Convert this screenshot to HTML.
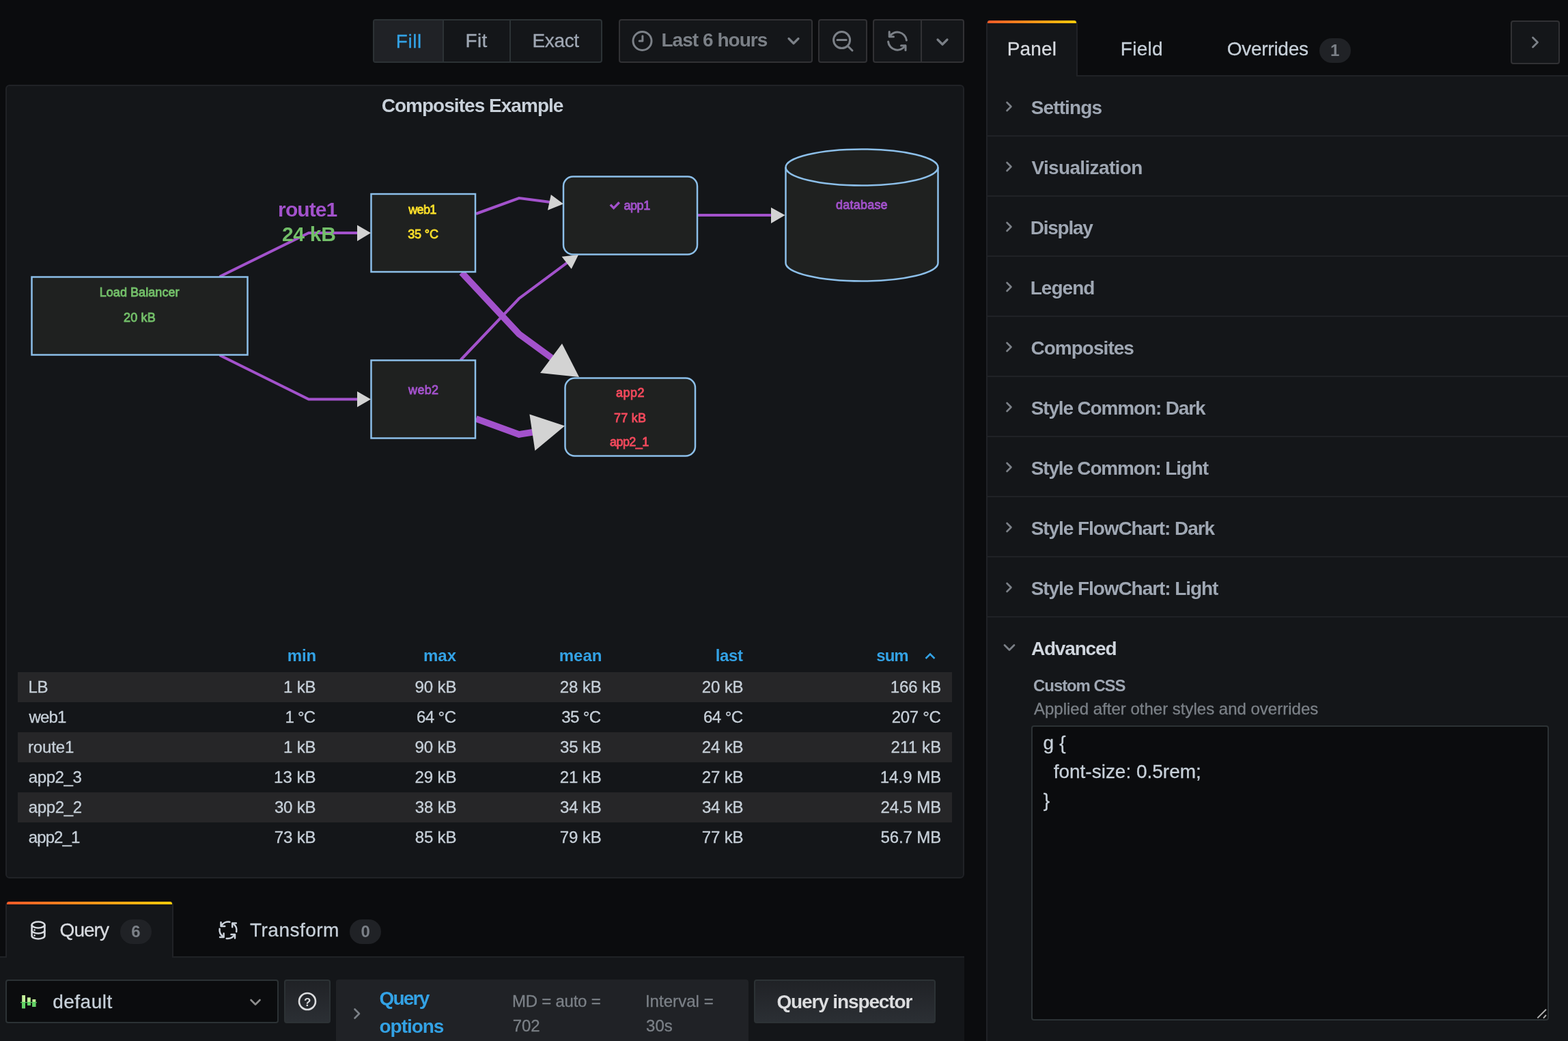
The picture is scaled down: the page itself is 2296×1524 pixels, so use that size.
<!DOCTYPE html>
<html lang="en"><head><meta charset="utf-8"><title>Composites Example - Grafana</title>
<style>
html,body{margin:0;padding:0;}
body{width:2296px;height:1524px;overflow:hidden;background:#0b0c0e;position:relative;
font-family:"Liberation Sans",sans-serif;}
#root{position:absolute;left:0;top:0;width:2296px;height:1524px;will-change:transform;}
.t{position:absolute;white-space:nowrap;line-height:1;}
.b{position:absolute;box-sizing:border-box;}
svg{position:absolute;overflow:visible;}
svg text{font-family:"Liberation Sans",sans-serif;}
</style></head><body><div id="root">
<div class="b" style="left:546px;top:28px;width:336px;height:64px;background:#141619;border:2px solid #2c3235;border-radius:4px;"></div>
<div class="b" style="left:548px;top:30px;width:101px;height:60px;background:#202226;"></div>
<div class="b" style="left:648px;top:30px;width:2px;height:60px;background:#2c3235;"></div>
<div class="b" style="left:746px;top:30px;width:2px;height:60px;background:#2c3235;"></div>
<div class="t" style="left:579.75px;top:46.50px;font-size:28px;color:#33a2e5;letter-spacing:0.558px;-webkit-text-stroke:0.3px;">Fill</div>
<div class="t" style="left:681.55px;top:46.30px;font-size:28px;color:#9fa7b3;letter-spacing:0.325px;-webkit-text-stroke:0.3px;">Fit</div>
<div class="t" style="left:779.45px;top:46.30px;font-size:28px;color:#9fa7b3;letter-spacing:-0.331px;-webkit-text-stroke:0.3px;">Exact</div>
<div class="b" style="left:906px;top:28px;width:284px;height:64px;background:#141619;border:2px solid #313134;border-radius:4px;"></div>
<svg style="left:922px;top:44px" width="36" height="36" viewBox="0 0 36 36"><g fill="none" stroke="#7b8087" stroke-width="3" stroke-linecap="round" stroke-linejoin="round"><circle cx="18.5" cy="16" r="13.5"/><path d="M18.9 8.7V16H14.2"/></g></svg>
<div class="t" style="left:968.45px;top:44.80px;font-size:28px;color:#7b8087;letter-spacing:-0.966px;font-weight:700;">Last 6 hours</div>
<svg style="left:1150px;top:48px" width="24" height="24" viewBox="0 0 24 24"><path d="M5 8.5L12 15.5L19 8.5" fill="none" stroke="#7b8087" stroke-width="3.2" stroke-linecap="round" stroke-linejoin="round"/></svg>
<div class="b" style="left:1198px;top:28px;width:72px;height:64px;background:#141619;border:2px solid #313134;border-radius:4px;"></div>
<svg style="left:1214px;top:42px" width="40" height="40" viewBox="0 0 40 40"><g fill="none" stroke="#7b8087" stroke-width="3" stroke-linecap="round"><circle cx="18.6" cy="16.6" r="12"/><path d="M12 16.6H25.2M27.5 25.5L34 32"/></g></svg>
<div class="b" style="left:1278px;top:28px;width:134px;height:64px;background:#141619;border:2px solid #313134;border-radius:4px;"></div>
<div class="b" style="left:1348px;top:30px;width:2px;height:60px;background:#313134;"></div>
<svg style="left:1296px;top:42px" width="36" height="36" viewBox="0 0 36 36"><g fill="none" stroke="#7b8087" stroke-width="3" stroke-linecap="round" stroke-linejoin="round"><path d="M6.2 4.5V11.7H12.5"/><path d="M30 31.5V24.8H23.5"/><path d="M6.5 11.5A13.5 13.5 0 0 1 31.4 17"/><path d="M29.5 24.8A13.5 13.5 0 0 1 4.6 19"/></g></svg>
<svg style="left:1368px;top:50px" width="24" height="24" viewBox="0 0 24 24"><path d="M5 8L12 15L19 8" fill="none" stroke="#7b8087" stroke-width="3.2" stroke-linecap="round" stroke-linejoin="round"/></svg>
<div class="b" style="left:8px;top:124px;width:1404px;height:1162px;background:#141619;border:2px solid #202226;border-radius:6px;"></div>
<div class="t" style="left:558.67px;top:141.10px;font-size:28px;color:#c9d1da;letter-spacing:-0.966px;font-weight:700;">Composites Example</div>
<div class="b" style="left:1444px;top:110px;width:860px;height:1420px;background:#141619;border-left:2px solid #202226;border-top:2px solid #202226;"></div>
<div class="b" style="left:1444px;top:30px;width:134px;height:82px;background:#141619;border-left:2px solid #202226;border-right:2px solid #202226;border-radius:5px 5px 0 0;"></div>
<div class="b" style="left:1446px;top:30px;width:130px;height:4px;background:linear-gradient(90deg,#f05a28 0%,#fbca0a 100%);border-radius:3px 3px 0 0;"></div>
<div class="t" style="left:1474.75px;top:58.30px;font-size:28px;color:#d8dbe0;letter-spacing:0.125px;-webkit-text-stroke:0.3px;">Panel</div>
<div class="t" style="left:1640.75px;top:58.30px;font-size:28px;color:#c7d0d9;letter-spacing:0.312px;-webkit-text-stroke:0.3px;">Field</div>
<div class="t" style="left:1796.75px;top:58.30px;font-size:28px;color:#c7d0d9;letter-spacing:-0.266px;-webkit-text-stroke:0.3px;">Overrides</div>
<div class="b" style="left:1932px;top:56px;width:46px;height:36px;background:#202226;border-radius:18px;"></div>
<div class="t" style="left:1947.88px;top:62.18px;font-size:24px;color:#7b8087;font-weight:700;">1</div>
<div class="b" style="left:2212px;top:30px;width:72px;height:64px;background:#141619;border:2px solid #313134;border-radius:4px;"></div>
<svg style="left:2236px;top:50px" width="24" height="24" viewBox="0 0 24 24"><path d="M8.5 5L15.5 12L8.5 19" fill="none" stroke="#7b8087" stroke-width="2.800" stroke-linecap="round" stroke-linejoin="round"/></svg>
<div class="b" style="left:1446px;top:198px;width:860px;height:2px;background:#202226;"></div>
<svg style="left:1466px;top:144px" width="24" height="24" viewBox="0 0 24 24"><path d="M8.5 6L14.500 12L8.5 18" fill="none" stroke="#7b8087" stroke-width="2.600" stroke-linecap="round" stroke-linejoin="round"/></svg>
<div class="t" style="left:1509.75px;top:144.30px;font-size:28px;color:#9fa7b3;letter-spacing:-0.889px;font-weight:700;">Settings</div>
<div class="b" style="left:1446px;top:286px;width:860px;height:2px;background:#202226;"></div>
<svg style="left:1466px;top:232px" width="24" height="24" viewBox="0 0 24 24"><path d="M8.5 6L14.500 12L8.5 18" fill="none" stroke="#7b8087" stroke-width="2.600" stroke-linecap="round" stroke-linejoin="round"/></svg>
<div class="t" style="left:1510.38px;top:232.30px;font-size:28px;color:#9fa7b3;letter-spacing:-0.646px;font-weight:700;">Visualization</div>
<div class="b" style="left:1446px;top:374px;width:860px;height:2px;background:#202226;"></div>
<svg style="left:1466px;top:320px" width="24" height="24" viewBox="0 0 24 24"><path d="M8.5 6L14.500 12L8.5 18" fill="none" stroke="#7b8087" stroke-width="2.600" stroke-linecap="round" stroke-linejoin="round"/></svg>
<div class="t" style="left:1508.75px;top:320.30px;font-size:28px;color:#9fa7b3;letter-spacing:-1.242px;font-weight:700;">Display</div>
<div class="b" style="left:1446px;top:462px;width:860px;height:2px;background:#202226;"></div>
<svg style="left:1466px;top:408px" width="24" height="24" viewBox="0 0 24 24"><path d="M8.5 6L14.500 12L8.5 18" fill="none" stroke="#7b8087" stroke-width="2.600" stroke-linecap="round" stroke-linejoin="round"/></svg>
<div class="t" style="left:1508.75px;top:408.30px;font-size:28px;color:#9fa7b3;letter-spacing:-0.985px;font-weight:700;">Legend</div>
<div class="b" style="left:1446px;top:550px;width:860px;height:2px;background:#202226;"></div>
<svg style="left:1466px;top:496px" width="24" height="24" viewBox="0 0 24 24"><path d="M8.5 6L14.500 12L8.5 18" fill="none" stroke="#7b8087" stroke-width="2.600" stroke-linecap="round" stroke-linejoin="round"/></svg>
<div class="t" style="left:1509.38px;top:496.30px;font-size:28px;color:#9fa7b3;letter-spacing:-0.967px;font-weight:700;">Composites</div>
<div class="b" style="left:1446px;top:638px;width:860px;height:2px;background:#202226;"></div>
<svg style="left:1466px;top:584px" width="24" height="24" viewBox="0 0 24 24"><path d="M8.5 6L14.500 12L8.5 18" fill="none" stroke="#7b8087" stroke-width="2.600" stroke-linecap="round" stroke-linejoin="round"/></svg>
<div class="t" style="left:1509.75px;top:584.30px;font-size:28px;color:#9fa7b3;letter-spacing:-1.150px;font-weight:700;">Style Common: Dark</div>
<div class="b" style="left:1446px;top:726px;width:860px;height:2px;background:#202226;"></div>
<svg style="left:1466px;top:672px" width="24" height="24" viewBox="0 0 24 24"><path d="M8.5 6L14.500 12L8.5 18" fill="none" stroke="#7b8087" stroke-width="2.600" stroke-linecap="round" stroke-linejoin="round"/></svg>
<div class="t" style="left:1509.75px;top:672.30px;font-size:28px;color:#9fa7b3;letter-spacing:-1.183px;font-weight:700;">Style Common: Light</div>
<div class="b" style="left:1446px;top:814px;width:860px;height:2px;background:#202226;"></div>
<svg style="left:1466px;top:760px" width="24" height="24" viewBox="0 0 24 24"><path d="M8.5 6L14.500 12L8.5 18" fill="none" stroke="#7b8087" stroke-width="2.600" stroke-linecap="round" stroke-linejoin="round"/></svg>
<div class="t" style="left:1509.75px;top:760.30px;font-size:28px;color:#9fa7b3;letter-spacing:-1.082px;font-weight:700;">Style FlowChart: Dark</div>
<div class="b" style="left:1446px;top:902px;width:860px;height:2px;background:#202226;"></div>
<svg style="left:1466px;top:848px" width="24" height="24" viewBox="0 0 24 24"><path d="M8.5 6L14.500 12L8.5 18" fill="none" stroke="#7b8087" stroke-width="2.600" stroke-linecap="round" stroke-linejoin="round"/></svg>
<div class="t" style="left:1509.75px;top:848.30px;font-size:28px;color:#9fa7b3;letter-spacing:-1.076px;font-weight:700;">Style FlowChart: Light</div>
<svg style="left:1466px;top:936px" width="24" height="24" viewBox="0 0 24 24"><path d="M5 8.5L12 15.5L19 8.5" fill="none" stroke="#7b8087" stroke-width="2.800" stroke-linecap="round" stroke-linejoin="round"/></svg>
<div class="t" style="left:1509.88px;top:935.80px;font-size:28px;color:#d0d6de;letter-spacing:-1.171px;font-weight:700;">Advanced</div>
<div class="t" style="left:1513.12px;top:991.98px;font-size:24px;color:#9fa7b3;letter-spacing:-1.103px;font-weight:700;">Custom CSS</div>
<div class="t" style="left:1514.00px;top:1025.68px;font-size:24px;color:#7b8087;-webkit-text-stroke:0.3px;">Applied after other styles and overrides</div>
<div class="b" style="left:1510px;top:1062px;width:758px;height:432px;background:#0b0c0e;border:2px solid #2c3235;border-radius:4px;"></div>
<div class="t" style="left:1527.58px;top:1074.10px;font-size:28px;color:#c7d0d9;letter-spacing:0.137px;-webkit-text-stroke:0.3px;">g {</div>
<div class="t" style="left:1542.72px;top:1116.30px;font-size:28px;color:#c7d0d9;letter-spacing:-0.012px;-webkit-text-stroke:0.3px;">font-size: 0.5rem;</div>
<div class="t" style="left:1527.72px;top:1158.30px;font-size:28px;color:#c7d0d9;-webkit-text-stroke:0.3px;">}</div>
<svg style="left:2248px;top:1474px" width="18" height="18" viewBox="0 0 18 18"><path d="M3.300 16.400L16 3.700M12 16.600L16 12" fill="none" stroke="#b0b0b0" stroke-width="2"/></svg>
<svg style="left:0;top:0" width="1420" height="900" viewBox="0 0 1420 900"><polyline points="321.6,405 452,341 525,341" fill="none" stroke="#a352cc" stroke-width="4" stroke-linejoin="miter"/><polyline points="321.6,520 452,584.5 525,584.5" fill="none" stroke="#a352cc" stroke-width="4" stroke-linejoin="miter"/><polyline points="697,313 760,290 806,296" fill="none" stroke="#a352cc" stroke-width="4" stroke-linejoin="miter"/><polyline points="1021,315 1131,315" fill="none" stroke="#a352cc" stroke-width="4" stroke-linejoin="miter"/><polyline points="674.5,527 760,437 832,383.5" fill="none" stroke="#a352cc" stroke-width="4" stroke-linejoin="miter"/><polyline points="676,399 760,489 812,527" fill="none" stroke="#a352cc" stroke-width="9.5" stroke-linejoin="miter"/><polyline points="697,613 760,636 782,632.5" fill="none" stroke="#a352cc" stroke-width="9.5" stroke-linejoin="miter"/><rect x="46.5" y="405.5" width="316" height="114" rx="0" fill="#1f2120" stroke="#8cbfe9" stroke-width="2.5"/><rect x="543.5" y="284" width="152.5" height="114" rx="0" fill="#1f2120" stroke="#8cbfe9" stroke-width="2.5"/><rect x="543.5" y="527.5" width="152.5" height="114" rx="0" fill="#1f2120" stroke="#8cbfe9" stroke-width="2.5"/><rect x="825" y="258.5" width="196" height="114" rx="14" fill="#1f2120" stroke="#8cbfe9" stroke-width="2.5"/><rect x="827.5" y="553.5" width="190.5" height="114" rx="14" fill="#1f2120" stroke="#8cbfe9" stroke-width="2.5"/><path d="M1150.5,245 A111.5,26.5 0 0 1 1373.5,245 L1373.5,385 A111.5,26.5 0 0 1 1150.5,385 Z" fill="#1f2120" stroke="#8cbfe9" stroke-width="2.5"/><path d="M1150.5,245 A111.5,26.5 0 0 0 1373.5,245" fill="none" stroke="#8cbfe9" stroke-width="2.5"/><polygon points="523,329.5 543,341 523,353" fill="#d3d3d3"/><polygon points="523,573 543,584.5 523,596" fill="#d3d3d3"/><polygon points="806.8,285 825,298.5 802,307.8" fill="#d3d3d3"/><polygon points="1129,303.7 1149.5,315 1129,327" fill="#d3d3d3"/><polygon points="822.6,375.7 847,373 836.7,393.8" fill="#d3d3d3"/><polygon points="823,503 848,552 791,546" fill="#d3d3d3"/><polygon points="775.4,606.4 827,623.6 783.4,659.7" fill="#d3d3d3"/><path d="M893.8,299.6 L898.6,304.6 L906.8,296.2" fill="none" stroke="#a352cc" stroke-width="3.4"/></svg>
<div class="t" style="left:407.12px;top:292.21px;font-size:30px;color:#a352cc;letter-spacing:-0.900px;font-weight:700;">route1</div>
<div class="t" style="left:413.00px;top:328.31px;font-size:30px;color:#73bf69;letter-spacing:-0.312px;font-weight:700;">24 kB</div>
<div class="t" style="left:145.72px;top:418.56px;font-size:18px;color:#73bf69;letter-spacing:0.058px;-webkit-text-stroke:0.85px;">Load Balancer</div>
<div class="t" style="left:180.93px;top:455.56px;font-size:18px;color:#73bf69;letter-spacing:0.213px;-webkit-text-stroke:0.85px;">20 kB</div>
<div class="t" style="left:598.17px;top:297.76px;font-size:18px;color:#fade2a;letter-spacing:-0.625px;-webkit-text-stroke:0.85px;">web1</div>
<div class="t" style="left:597.17px;top:333.76px;font-size:18px;color:#fade2a;letter-spacing:-0.125px;-webkit-text-stroke:0.85px;">35 °C</div>
<div class="t" style="left:598.12px;top:561.76px;font-size:18px;color:#a352cc;letter-spacing:0.317px;-webkit-text-stroke:0.85px;">web2</div>
<div class="t" style="left:913.45px;top:291.76px;font-size:18px;color:#a352cc;letter-spacing:-0.433px;-webkit-text-stroke:0.85px;">app1</div>
<div class="t" style="left:1224.05px;top:291.26px;font-size:18px;color:#a352cc;letter-spacing:0.214px;-webkit-text-stroke:0.85px;">database</div>
<div class="t" style="left:902.05px;top:566.46px;font-size:18px;color:#f2495c;letter-spacing:0.508px;-webkit-text-stroke:0.85px;">app2</div>
<div class="t" style="left:899.08px;top:602.66px;font-size:18px;color:#f2495c;letter-spacing:0.213px;-webkit-text-stroke:0.85px;">77 kB</div>
<div class="t" style="left:893.05px;top:638.46px;font-size:18px;color:#f2495c;letter-spacing:-0.580px;-webkit-text-stroke:0.85px;">app2_1</div>
<div class="t" style="left:420.70px;top:948.38px;font-size:24px;color:#33a2e5;letter-spacing:-0.075px;font-weight:700;">min</div>
<div class="t" style="left:620.00px;top:948.38px;font-size:24px;color:#33a2e5;font-weight:700;">max</div>
<div class="t" style="left:818.75px;top:948.38px;font-size:24px;color:#33a2e5;font-weight:700;">mean</div>
<div class="t" style="left:1047.77px;top:948.38px;font-size:24px;color:#33a2e5;letter-spacing:-0.367px;font-weight:700;">last</div>
<div class="t" style="left:1283.25px;top:948.38px;font-size:24px;color:#33a2e5;letter-spacing:-0.962px;font-weight:700;">sum</div>
<svg style="left:1352px;top:950px" width="20" height="20" viewBox="0 0 20 20"><path d="M3.5 14L10 7.5L16.5 14" fill="none" stroke="#33a2e5" stroke-width="2.6"/></svg>
<div class="b" style="left:26px;top:984px;width:1368px;height:44px;background:#262628;"></div>
<div class="t" style="left:41.42px;top:993.68px;font-size:24px;color:#c7d0d9;letter-spacing:-0.250px;-webkit-text-stroke:0.3px;">LB</div>
<div class="t" style="left:414.95px;top:993.68px;font-size:24px;color:#c7d0d9;letter-spacing:-0.133px;-webkit-text-stroke:0.3px;">1 kB</div>
<div class="t" style="left:607.58px;top:993.68px;font-size:24px;color:#c7d0d9;letter-spacing:-0.125px;-webkit-text-stroke:0.3px;">90 kB</div>
<div class="t" style="left:819.77px;top:993.68px;font-size:24px;color:#c7d0d9;letter-spacing:-0.125px;-webkit-text-stroke:0.3px;">28 kB</div>
<div class="t" style="left:1027.67px;top:993.68px;font-size:24px;color:#c7d0d9;letter-spacing:-0.125px;-webkit-text-stroke:0.3px;">20 kB</div>
<div class="t" style="left:1303.75px;top:993.68px;font-size:24px;color:#c7d0d9;letter-spacing:-0.050px;-webkit-text-stroke:0.3px;">166 kB</div>
<div class="t" style="left:42.42px;top:1037.68px;font-size:24px;color:#c7d0d9;letter-spacing:-0.825px;-webkit-text-stroke:0.3px;">web1</div>
<div class="t" style="left:417.55px;top:1037.68px;font-size:24px;color:#c7d0d9;letter-spacing:-0.792px;-webkit-text-stroke:0.3px;">1 °C</div>
<div class="t" style="left:609.88px;top:1037.68px;font-size:24px;color:#c7d0d9;letter-spacing:-0.544px;-webkit-text-stroke:0.3px;">64 °C</div>
<div class="t" style="left:822.32px;top:1037.68px;font-size:24px;color:#c7d0d9;letter-spacing:-0.606px;-webkit-text-stroke:0.3px;">35 °C</div>
<div class="t" style="left:1029.97px;top:1037.68px;font-size:24px;color:#c7d0d9;letter-spacing:-0.544px;-webkit-text-stroke:0.3px;">64 °C</div>
<div class="t" style="left:1305.67px;top:1037.68px;font-size:24px;color:#c7d0d9;letter-spacing:-0.285px;-webkit-text-stroke:0.3px;">207 °C</div>
<div class="b" style="left:26px;top:1072px;width:1368px;height:44px;background:#262628;"></div>
<div class="t" style="left:41.00px;top:1081.68px;font-size:24px;color:#c7d0d9;letter-spacing:-0.160px;-webkit-text-stroke:0.3px;">route1</div>
<div class="t" style="left:414.95px;top:1081.68px;font-size:24px;color:#c7d0d9;letter-spacing:-0.133px;-webkit-text-stroke:0.3px;">1 kB</div>
<div class="t" style="left:607.58px;top:1081.68px;font-size:24px;color:#c7d0d9;letter-spacing:-0.125px;-webkit-text-stroke:0.3px;">90 kB</div>
<div class="t" style="left:820.02px;top:1081.68px;font-size:24px;color:#c7d0d9;letter-spacing:-0.188px;-webkit-text-stroke:0.3px;">35 kB</div>
<div class="t" style="left:1027.67px;top:1081.68px;font-size:24px;color:#c7d0d9;letter-spacing:-0.125px;-webkit-text-stroke:0.3px;">24 kB</div>
<div class="t" style="left:1304.38px;top:1081.68px;font-size:24px;color:#c7d0d9;letter-spacing:0.200px;-webkit-text-stroke:0.3px;">211 kB</div>
<div class="t" style="left:41.80px;top:1125.68px;font-size:24px;color:#c7d0d9;letter-spacing:-0.425px;-webkit-text-stroke:0.3px;">app2_3</div>
<div class="t" style="left:401.05px;top:1125.68px;font-size:24px;color:#c7d0d9;letter-spacing:0.031px;-webkit-text-stroke:0.3px;">13 kB</div>
<div class="t" style="left:607.58px;top:1125.68px;font-size:24px;color:#c7d0d9;letter-spacing:-0.125px;-webkit-text-stroke:0.3px;">29 kB</div>
<div class="t" style="left:819.77px;top:1125.68px;font-size:24px;color:#c7d0d9;letter-spacing:-0.125px;-webkit-text-stroke:0.3px;">21 kB</div>
<div class="t" style="left:1027.67px;top:1125.68px;font-size:24px;color:#c7d0d9;letter-spacing:-0.125px;-webkit-text-stroke:0.3px;">27 kB</div>
<div class="t" style="left:1288.75px;top:1125.68px;font-size:24px;color:#c7d0d9;letter-spacing:0.021px;-webkit-text-stroke:0.3px;">14.9 MB</div>
<div class="b" style="left:26px;top:1160px;width:1368px;height:44px;background:#262628;"></div>
<div class="t" style="left:41.80px;top:1169.68px;font-size:24px;color:#c7d0d9;letter-spacing:-0.340px;-webkit-text-stroke:0.3px;">app2_2</div>
<div class="t" style="left:401.93px;top:1169.68px;font-size:24px;color:#c7d0d9;letter-spacing:-0.188px;-webkit-text-stroke:0.3px;">30 kB</div>
<div class="t" style="left:607.83px;top:1169.68px;font-size:24px;color:#c7d0d9;letter-spacing:-0.188px;-webkit-text-stroke:0.3px;">38 kB</div>
<div class="t" style="left:820.02px;top:1169.68px;font-size:24px;color:#c7d0d9;letter-spacing:-0.188px;-webkit-text-stroke:0.3px;">34 kB</div>
<div class="t" style="left:1027.92px;top:1169.68px;font-size:24px;color:#c7d0d9;letter-spacing:-0.188px;-webkit-text-stroke:0.3px;">34 kB</div>
<div class="t" style="left:1289.38px;top:1169.68px;font-size:24px;color:#c7d0d9;letter-spacing:-0.083px;-webkit-text-stroke:0.3px;">24.5 MB</div>
<div class="t" style="left:41.80px;top:1213.68px;font-size:24px;color:#c7d0d9;letter-spacing:-0.920px;-webkit-text-stroke:0.3px;">app2_1</div>
<div class="t" style="left:401.68px;top:1213.68px;font-size:24px;color:#c7d0d9;letter-spacing:-0.125px;-webkit-text-stroke:0.3px;">73 kB</div>
<div class="t" style="left:607.70px;top:1213.68px;font-size:24px;color:#c7d0d9;letter-spacing:-0.156px;-webkit-text-stroke:0.3px;">85 kB</div>
<div class="t" style="left:819.77px;top:1213.68px;font-size:24px;color:#c7d0d9;letter-spacing:-0.125px;-webkit-text-stroke:0.3px;">79 kB</div>
<div class="t" style="left:1027.67px;top:1213.68px;font-size:24px;color:#c7d0d9;letter-spacing:-0.125px;-webkit-text-stroke:0.3px;">77 kB</div>
<div class="t" style="left:1289.62px;top:1213.68px;font-size:24px;color:#c7d0d9;letter-spacing:-0.125px;-webkit-text-stroke:0.3px;">56.7 MB</div>
<div class="b" style="left:0px;top:1400px;width:1412px;height:130px;background:#141619;border-top:2px solid #202226;"></div>
<div class="b" style="left:8px;top:1320px;width:246px;height:82px;background:#141619;border-left:2px solid #202226;border-right:2px solid #202226;border-radius:5px 5px 0 0;"></div>
<div class="b" style="left:10px;top:1320px;width:242px;height:4px;background:linear-gradient(90deg,#f05a28 0%,#fbca0a 100%);border-radius:3px 3px 0 0;"></div>
<svg style="left:40px;top:1346px" width="32" height="32" viewBox="0 0 32 32"><g fill="none" stroke="#d8dbe0" stroke-width="2.6"><ellipse cx="16" cy="8" rx="9.4" ry="4.5"/><path d="M6.6 8v16c0 2.5 4.2 4.5 9.4 4.500s9.400-2 9.400-4.500V8"/><path d="M6.600 16c0 2.500 4.200 4.500 9.400 4.500s9.400-2 9.400-4.500"/></g><circle cx="10.500" cy="15.500" r="1.300" fill="#d8dbe0"/><circle cx="10.500" cy="23.500" r="1.300" fill="#d8dbe0"/></svg>
<div class="t" style="left:87.55px;top:1348.30px;font-size:28px;color:#d8dbe0;letter-spacing:-0.950px;-webkit-text-stroke:0.3px;">Query</div>
<div class="b" style="left:176px;top:1346px;width:46px;height:36px;background:#202226;border-radius:18px;"></div>
<div class="t" style="left:192.31px;top:1352.18px;font-size:24px;color:#7b8087;font-weight:700;">6</div>
<svg style="left:310px;top:1338px" width="50" height="48" viewBox="0 0 50 48"><g fill="none" stroke="#ccd3dc" stroke-width="2.5" stroke-linecap="round" stroke-linejoin="round"><path d="M13.5 12.3V18H19.2"/><path d="M26.4 11.7A12 12 0 0 0 14 17.5"/><path d="M35.8 13.5H30.2V19.2"/><path d="M36.2 26.1A12 12 0 0 0 30.8 14"/><path d="M34 35.5V29.9H28.5"/><path d="M21.7 35.9A12 12 0 0 0 33.5 30.4"/><path d="M12 34H17.6V28.400"/><path d="M11.6 21.7A12 12 0 0 0 17.1 33.5"/></g></svg>
<div class="t" style="left:365.98px;top:1348.30px;font-size:28px;color:#c7d0d9;letter-spacing:0.484px;-webkit-text-stroke:0.3px;">Transform</div>
<div class="b" style="left:512px;top:1346px;width:46px;height:36px;background:#202226;border-radius:18px;"></div>
<div class="t" style="left:528.38px;top:1352.18px;font-size:24px;color:#7b8087;font-weight:700;">0</div>
<div class="b" style="left:8px;top:1434px;width:400px;height:64px;background:#0b0c0e;border:2px solid #2c3235;border-radius:4px;"></div>
<svg style="left:30px;top:1454px" width="26" height="24" viewBox="0 0 26 24"><rect x="2.2" y="3" width="4.8" height="19.2" fill="#c5f29b"/><rect x="2.2" y="13.5" width="4.8" height="8.7" fill="#62d466"/><rect x="10" y="6.3" width="4.8" height="11.5" fill="#c5f29b"/><rect x="10" y="13.5" width="4.8" height="4.3" fill="#62d466"/><rect x="17.4" y="9" width="4.9" height="11" fill="#c5f29b"/><rect x="17.4" y="13.5" width="4.9" height="6.5" fill="#62d466"/><rect x="0" y="12.9" width="24" height="1.3" fill="#4fc45a"/></svg>
<div class="t" style="left:77.28px;top:1452.70px;font-size:28px;color:#c7d0d9;letter-spacing:0.475px;-webkit-text-stroke:0.3px;">default</div>
<svg style="left:362px;top:1456px" width="24" height="24" viewBox="0 0 24 24"><path d="M5.500 8L12 14.500L18.500 8" fill="none" stroke="#8e8e8e" stroke-width="2.600" stroke-linecap="round" stroke-linejoin="round"/></svg>
<div class="b" style="left:416px;top:1434px;width:68px;height:64px;background:linear-gradient(180deg,#202226 0%,#2b2f34 100%);border:2px solid #2c3235;border-radius:4px;"></div>
<svg style="left:434px;top:1450px" width="32" height="32" viewBox="0 0 32 32"><circle cx="16" cy="16" r="12" fill="none" stroke="#dcdddf" stroke-width="2.600"/></svg>
<div class="t" style="left:444.88px;top:1458.61px;font-size:17px;color:#dcdddf;font-weight:700;">?</div>
<div class="b" style="left:492px;top:1434px;width:604px;height:100px;background:#202226;border-radius:4px;"></div>
<svg style="left:510px;top:1472px" width="24" height="24" viewBox="0 0 24 24"><path d="M9.500 5.500L16 12L9.500 18.500" fill="none" stroke="#7b8087" stroke-width="2.600" stroke-linecap="round" stroke-linejoin="round"/></svg>
<div class="t" style="left:555.38px;top:1448.30px;font-size:28px;color:#33a2e5;letter-spacing:-1.738px;font-weight:700;">Query</div>
<div class="t" style="left:555.50px;top:1489.30px;font-size:28px;color:#33a2e5;letter-spacing:-1.033px;font-weight:700;">options</div>
<div class="t" style="left:749.92px;top:1453.68px;font-size:24px;color:#7b8087;letter-spacing:-0.230px;-webkit-text-stroke:0.3px;">MD = auto =</div>
<div class="t" style="left:750.67px;top:1489.68px;font-size:24px;color:#7b8087;-webkit-text-stroke:0.3px;">702</div>
<div class="t" style="left:944.88px;top:1453.68px;font-size:24px;color:#7b8087;letter-spacing:0.053px;-webkit-text-stroke:0.3px;">Interval =</div>
<div class="t" style="left:946.12px;top:1489.68px;font-size:24px;color:#7b8087;-webkit-text-stroke:0.3px;">30s</div>
<div class="b" style="left:1104px;top:1434px;width:266px;height:64px;background:linear-gradient(180deg,#202226 0%,#2b2f34 100%);border:2px solid #2c3235;border-radius:4px;"></div>
<div class="t" style="left:1137.38px;top:1452.80px;font-size:28px;color:#dcdddf;letter-spacing:-1.125px;font-weight:700;">Query inspector</div>
</div></body></html>
